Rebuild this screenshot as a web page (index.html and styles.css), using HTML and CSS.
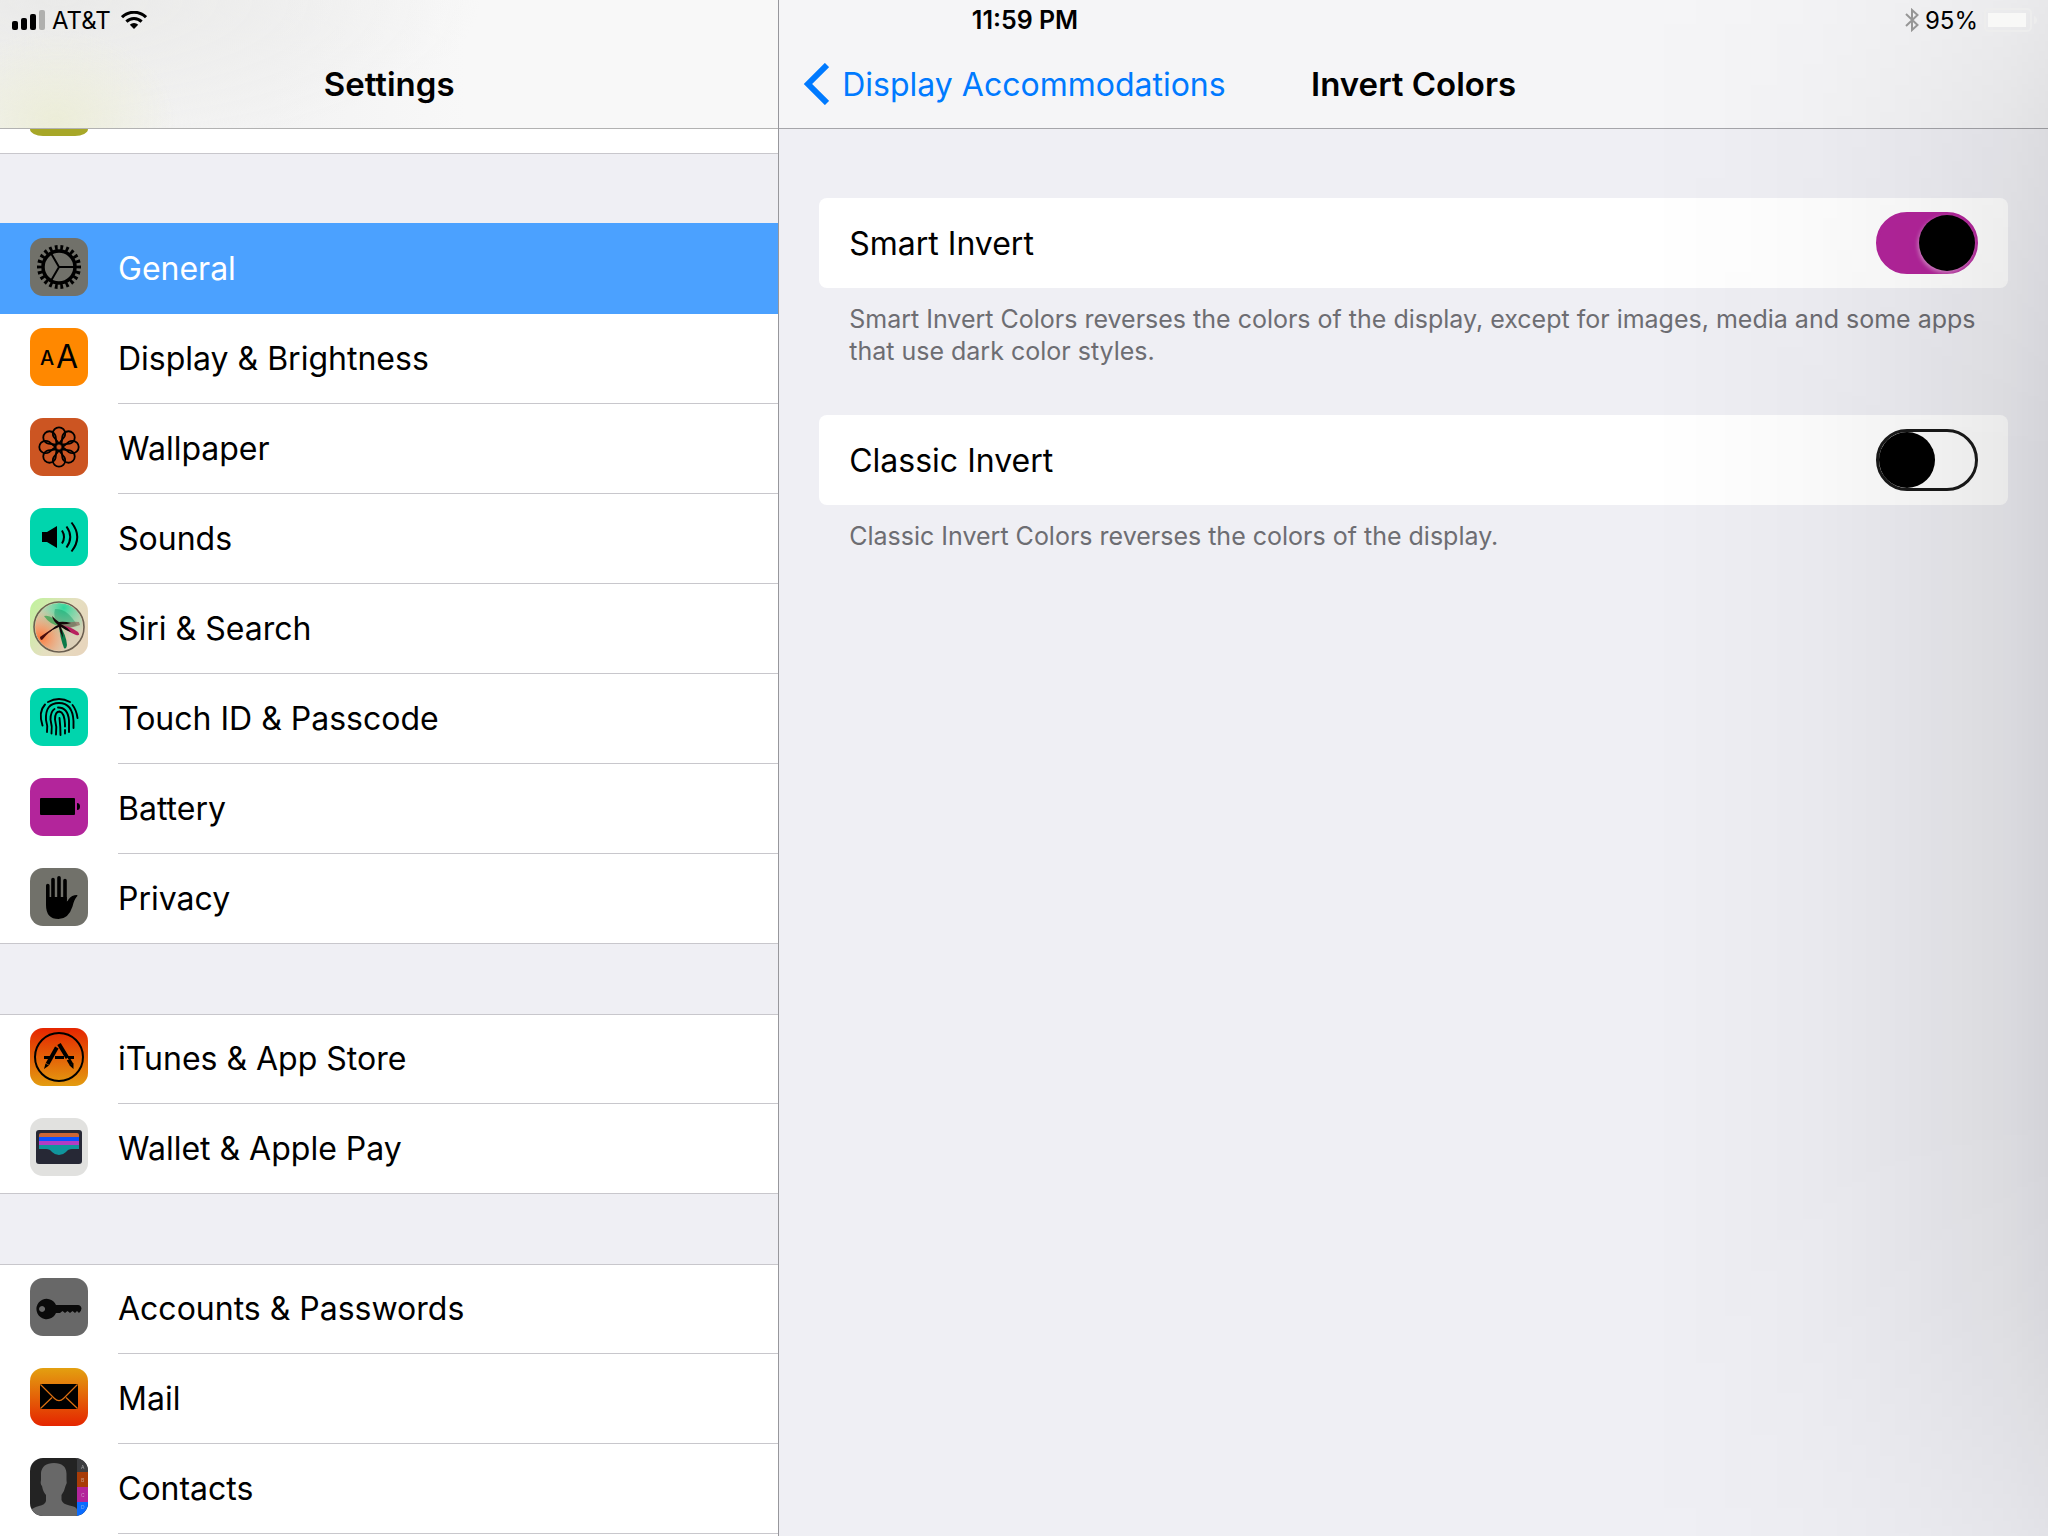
FILE: index.html
```html
<!DOCTYPE html>
<html lang="en">
<head>
  <meta charset="UTF-8" />
  <meta name="viewport" content="width=device-width, initial-scale=1.0"/>
  <title>Settings – Invert Colors</title>
  <link rel="stylesheet" href="styles.css">
</head>
<body>

  <div class="status-bar">
    <div class="status-left">
      <svg class="signal" width="34" height="20" viewBox="0 0 34 20">
        <rect x="0" y="11" width="6" height="9" rx="2"/>
        <rect x="9" y="8" width="6" height="12" rx="2"/>
        <rect x="18" y="4" width="6" height="16" rx="2"/>
        <rect x="27" y="0" width="6" height="20" rx="2" fill="#b0b0ae"/>
      </svg>
      <span class="carrier">AT&amp;T</span>
      <svg width="26" height="18" viewBox="0 0 26 18" fill="none" stroke="#000" stroke-width="3">
        <path d="M1 6.2a17 17 0 0 1 24 0"/>
        <path d="M5.4 10.6a10.8 10.8 0 0 1 15.2 0"/>
        <path d="M13 18l-4.2-4.2a6 6 0 0 1 8.4 0z" fill="#000" stroke="none"/>
      </svg>
    </div>
    <span class="clock">11:59 PM</span>
    <div class="status-right">
      <svg width="14" height="24" viewBox="0 0 14 24" fill="none" stroke="#969696" stroke-width="2">
        <path d="M1 6l11.500 11-5.500 5V2l5.500 5L1 18"/>
      </svg>
      <span>95%</span>
      <svg width="54" height="24" viewBox="0 0 54 24">
        <rect x="1" y="1" width="46" height="22" rx="4" fill="none" stroke="#ededed" stroke-width="2"/>
        <rect x="4" y="5" width="38" height="14" fill="#f8f8f7"/>
        <path d="M50 8q3 1 3 4t-3 4z" fill="#ededed"/>
      </svg>
    </div>
  </div>

  <div class="split">
    <nav class="sidebar">
      <header class="bar sidebar-bar">
        <h1>Settings</h1>
      </header>

      <div class="group group-scrolled">
        <span class="scrolled-icon"></span>
      </div>

      <div class="group">
        <a class="row selected" href="#general">
          <svg class="icon" viewBox="0 0 58 58">
            <rect width="58" height="58" rx="13" fill="#71716a"/>
            <g fill="none" stroke="#000">
              <circle cx="29" cy="29" r="16" stroke-width="3.500"/>
              <circle cx="29" cy="29" r="19.500" stroke-width="5" pathLength="44" stroke-dasharray="1 1" stroke-dashoffset=".5"/>
              <path d="M29 29h16M29 29l-8-13.800M29 29l-8 13.800" stroke-width="2"/>
            </g>
          </svg>
          <span>General</span>
        </a>
        <a class="row" href="#display">
          <svg class="icon" viewBox="0 0 58 58">
            <rect width="58" height="58" rx="13" fill="#ff8800"/>
            <text x="10" y="37" font-size="20" font-weight="500">A</text>
            <text x="26" y="40" font-size="32" font-weight="400">A</text>
          </svg>
          <span>Display &amp; Brightness</span>
        </a>
        <a class="row" href="#wallpaper">
          <svg class="icon" viewBox="0 0 58 58">
            <rect width="58" height="58" rx="13" fill="#cc5522"/>
            <defs>
              <path id="petal" d="M29 25.500l-5.200-6.500q-1-1.500-1-3.500a6.200 6.200 0 0 1 12.400 0q0 2-1 3.500z"/>
            </defs>
            <g fill="none" stroke="#000" stroke-width="1.800">
              <use href="#petal"/>
              <use href="#petal" transform="rotate(45 29 29)"/>
              <use href="#petal" transform="rotate(90 29 29)"/>
              <use href="#petal" transform="rotate(135 29 29)"/>
              <use href="#petal" transform="rotate(180 29 29)"/>
              <use href="#petal" transform="rotate(225 29 29)"/>
              <use href="#petal" transform="rotate(270 29 29)"/>
              <use href="#petal" transform="rotate(315 29 29)"/>
              <circle cx="29" cy="29" r="3.600"/>
            </g>
          </svg>
          <span>Wallpaper</span>
        </a>
        <a class="row" href="#sounds">
          <svg class="icon" viewBox="0 0 58 58">
            <rect width="58" height="58" rx="13" fill="#00d5ad"/>
            <path d="M12 24h5l10-6v22l-10-6h-5z"/>
            <g fill="none" stroke="#000" stroke-width="2">
              <path d="M32 22.500q4 6.500 0 13"/>
              <path d="M36.500 18.500q7.500 10.500 0 21"/>
              <path d="M41.500 14.500q11.500 14.500 0 29"/>
            </g>
          </svg>
          <span>Sounds</span>
        </a>
        <a class="row" href="#siri">
          <svg class="icon" viewBox="0 0 58 58">
            <defs>
              <linearGradient id="siri-bg" x1="0" y1="0" x2="1" y2=".6">
                <stop offset="0" stop-color="#bff39b"/>
                <stop offset=".6" stop-color="#e5dfc0"/>
                <stop offset="1" stop-color="#e7d6bd"/>
              </linearGradient>
              <radialGradient id="siri-green" cx=".6" cy=".1" r=".65">
                <stop offset="0" stop-color="#2cd79c"/>
                <stop offset="1" stop-color="#8fdca8" stop-opacity="0"/>
              </radialGradient>
              <radialGradient id="siri-orange" cx=".12" cy=".72" r=".6">
                <stop offset="0" stop-color="#ff7a3c"/>
                <stop offset="1" stop-color="#f0a070" stop-opacity="0"/>
              </radialGradient>
              <clipPath id="siri-clip"><circle cx="29" cy="29" r="24"/></clipPath>
            </defs>
            <rect width="58" height="58" rx="13" fill="url(#siri-bg)"/>
            <g clip-path="url(#siri-clip)">
              <circle cx="29" cy="29" r="24" fill="#dcd0b8"/>
              <circle cx="29" cy="29" r="24" fill="url(#siri-green)"/>
              <circle cx="29" cy="29" r="24" fill="url(#siri-orange)"/>
              <path d="M30 28Q20 27 14 18q8-2 16 10z" fill="#2f9e4a" opacity=".7"/>
              <path d="M30 28Q22 20 25 11q12-1 22 16-8 4-17 1z" fill="#0f9060" opacity=".4"/>
              <path d="M29 27q10-4 20-3l1 3q-9 4-21 2z" fill="#8a5a50" opacity=".6"/>
              <path d="M30 27q10 1 18 7 3 4-2 3-8-3-16-10z" fill="#b8205f"/>
              <path d="M29 27q7 9 8 20-1 5-3 3-4-10-5-23z" fill="#0c7a48"/>
              <path d="M31 26Q19 32 10 39q0 3 2 3 8-10 19-16z" fill="#4a0d0d"/>
              <path d="M31 26q6 3 10 8-6-2-10-5 2 6 2 11-3-6-4-11-6 2-10 6 4-6 9-8-5-4-6-9 4 4 7 6 5-1 12 1-6 2-10 1z" fill="#130609"/>
            </g>
            <circle cx="29" cy="29" r="25" fill="none" stroke="#6b5f50" stroke-width="1.600"/>
          </svg>
          <span>Siri &amp; Search</span>
        </a>
        <a class="row" href="#touchid">
          <svg class="icon" viewBox="0 0 58 58">
            <rect width="58" height="58" rx="13" fill="#00d5ad"/>
            <g fill="none" stroke="#000" stroke-width="1.900" stroke-linecap="round">
              <path d="M18 14q11-6 22 0"/>
              <path d="M12.500 37.500Q8 24 15 16.500"/>
              <path d="M42.500 17q4 5 5 13"/>
              <path d="M17 44q1-6-1-12-1-17 13-17 13.500 0 14.500 18v7"/>
              <path d="M21.500 45.500q1-7-1-14 0-8 4-10.500"/>
              <path d="M28 19.500q10 0 11 13v11.500"/>
              <path d="M26 46.500q1-8-1-15 0-8 4.500-8 5 1 5.500 13v2"/>
              <path d="M35 42v3.500"/>
              <path d="M30.500 47q0-8-1-17"/>
            </g>
          </svg>
          <span>Touch ID &amp; Passcode</span>
        </a>
        <a class="row" href="#battery">
          <svg class="icon" viewBox="0 0 58 58">
            <rect width="58" height="58" rx="13" fill="#b3259b"/>
            <rect x="10" y="20" width="35" height="17" rx="1"/>
            <path d="M47 25q3 0 3 3.500T47 32z"/>
          </svg>
          <span>Battery</span>
        </a>
        <a class="row row-last" href="#privacy">
          <svg class="icon" viewBox="0 0 58 58">
            <rect width="58" height="58" rx="13" fill="#71716a"/>
            <g stroke="#000" stroke-width="3.600" stroke-linecap="round">
              <path d="M17.800 17.500V34M23 11.500V32M29 9.800V32M35 12.500V32"/>
            </g>
            <path d="M16 29h20.800v4.500q1-.5 2-2.500 3-4 8-4 1.500.5-.3 2-2.500 3-4 9.500Q38.500 51 28.500 51 16 51 16 37z"/>
          </svg>
          <span>Privacy</span>
        </a>
      </div>

      <div class="group">
        <a class="row" href="#store">
          <svg class="icon" viewBox="0 0 58 58">
            <defs>
              <linearGradient id="store-bg" x1="0" y1="0" x2="0" y2="1">
                <stop offset="0" stop-color="#e52500"/>
                <stop offset="1" stop-color="#e39c10"/>
              </linearGradient>
            </defs>
            <rect width="58" height="58" rx="13" fill="url(#store-bg)"/>
            <circle cx="29" cy="29" r="24" fill="none" stroke="#000" stroke-width="2"/>
            <path d="M14 28h8v3h-8zM25 28h9v3h-9zM38 28h6v3h-6z"/>
            <g fill="none" stroke="#000" stroke-width="4">
              <path d="M26.800 19.500L17.500 36"/>
              <path d="M29 16l8.500 14M38.500 31.500l3 5"/>
            </g>
            <path d="M15.500 35.500l3.500 2-5 3.500zM39.500 37.500l4-2.500v6z"/>
          </svg>
          <span>iTunes &amp; App Store</span>
        </a>
        <a class="row row-last" href="#wallet">
          <svg class="icon" viewBox="0 0 58 58">
            <rect width="58" height="58" rx="13" fill="#e1e1df"/>
            <rect x="6" y="12" width="46" height="34" rx="3" fill="#262835"/>
            <path d="M9 19v-2q0-2 2-2h36q2 0 2 2v2z" fill="#cb6636"/>
            <rect x="9" y="19" width="40" height="4" fill="#0a50ff"/>
            <rect x="9" y="23" width="40" height="4" fill="#b23cc4"/>
            <path d="M9 27h40v4h-7q-4 0-6 3-3 3-7 3t-7-3q-2-3-6-3H9z" fill="#10959c"/>
          </svg>
          <span>Wallet &amp; Apple Pay</span>
        </a>
      </div>

      <div class="group group-fill">
        <a class="row" href="#accounts">
          <svg class="icon" viewBox="0 0 58 58">
            <rect width="58" height="58" rx="13" fill="#686868"/>
            <path fill-rule="evenodd" d="M26 27h22q3 0 3.500 3.500-.5 3.500-2.500 4.500l-2-2-2 2-2.500-2-2.500 2-2.500-2-2.500 2-2.500-2-2.500 2H26A10.200 10.200 0 1 1 26 27zM12 28a3 3 0 1 0 .1 0z" fill="#0a0a0a"/>
          </svg>
          <span>Accounts &amp; Passwords</span>
        </a>
        <a class="row" href="#mail">
          <svg class="icon" viewBox="0 0 58 58">
            <defs>
              <linearGradient id="mail-bg" x1="0" y1="0" x2="0" y2="1">
                <stop offset="0" stop-color="#e3a010"/>
                <stop offset="1" stop-color="#e52500"/>
              </linearGradient>
            </defs>
            <rect width="58" height="58" rx="13" fill="url(#mail-bg)"/>
            <rect x="10" y="16" width="38" height="25" rx="1"/>
            <path d="M10.500 16.500l14 14q4.500 4.500 9 0l14-14M10.500 40.500l11.500-11M47.500 40.500L36 29.500" fill="none" stroke="#dd6f10" stroke-width="1.200"/>
          </svg>
          <span>Mail</span>
        </a>
        <a class="row" href="#contacts">
          <svg class="icon" viewBox="0 0 58 58">
            <defs>
              <clipPath id="contacts-clip"><rect width="58" height="58" rx="13"/></clipPath>
            </defs>
            <g clip-path="url(#contacts-clip)">
              <rect width="58" height="58" fill="#232323"/>
              <path d="M24 5q12 0 12.500 10.500v6.500q1 3-1 6-1 5-4 9v5q1 4 8 5.500 7 1 7.500 4V58H0v-5q2-3 9-5 6-1 7-5v-6q-3-3-4-9-2-2-1-6v-7Q12 5 24 5z" fill="#686868"/>
              <rect x="47" y="0" width="11" height="14" fill="#3c3d40"/>
              <rect x="47" y="14" width="11" height="15" fill="#a83c08"/>
              <rect x="47" y="29" width="11" height="15" fill="#b3259b"/>
              <rect x="47" y="44" width="11" height="14" fill="#0a6cff"/>
              <g class="tab-letters" font-size="5">
                <text x="51" y="11">A</text>
                <text x="51" y="24">B</text>
                <text x="51" y="39">C</text>
                <text x="51" y="51">D</text>
              </g>
            </g>
          </svg>
          <span>Contacts</span>
        </a>
      </div>
    </nav>

    <main class="detail">
      <header class="bar detail-bar">
        <a class="back" href="#accommodations">
          <svg width="26" height="42" viewBox="0 0 26 42" fill="none" stroke="#007aff" stroke-width="6">
            <path d="M24 2L5 21l19 19"/>
          </svg>
          <span>Display Accommodations</span>
        </a>
        <h2>Invert Colors</h2>
      </header>

      <section class="options">
        <div class="option">
          <div class="card">
            <label for="smart-invert">Smart Invert</label>
            <input class="switch" type="checkbox" role="switch" id="smart-invert" checked />
          </div>
          <p>Smart Invert Colors reverses the colors of the display, except for images, media and some apps that use dark color styles.</p>
        </div>
        <div class="option">
          <div class="card">
            <label for="classic-invert">Classic Invert</label>
            <input class="switch" type="checkbox" role="switch" id="classic-invert" />
          </div>
          <p>Classic Invert Colors reverses the colors of the display.</p>
        </div>
      </section>
    </main>
  </div>

</body>
</html>
```
FILE: styles.css
```css
* {
  box-sizing: border-box;
}
body {
  font-family: Inter, 'Liberation Sans', sans-serif;
  font-size: 32px;
  color: #000;
  background-color: #efeff4;
  margin: 0;
}
a {
  color: inherit;
  text-decoration: none;
}
h1, h2 {
  margin: 0;
  font-size: 33px;
  font-weight: 600;
}

/* status bar, lies over both panes */
.status-bar {
  position: absolute;
  top: 0;
  left: 0;
  right: 0;
  z-index: 2;
  height: 40px;
  padding: 0 10px 0 12px;
  display: grid;
  grid-template-columns: 1fr auto 1fr;
  align-items: center;
  font-size: 24px;
}
.status-left, .status-right {
  display: flex;
  align-items: center;
}
.status-left {
  gap: 10px;
}
.signal {
  margin-right: -4px;
}
.status-right {
  gap: 6px;
  justify-content: flex-end;
}
.clock {
  font-size: 25px;
  font-weight: 600;
}

.split {
  display: flex;
  height: 100vh;
  overflow: hidden;
}
.bar {
  flex: none;
  height: 129px;
  padding-top: 40px;
  border-bottom: 1px solid #a5a5aa;
}

/* sidebar */
.sidebar {
  flex: 0 0 calc(38% + 1px);
  display: flex;
  flex-direction: column;
  gap: 70px;
  border-right: 1px solid #97979c;
}
.sidebar-bar {
  display: flex;
  align-items: center;
  justify-content: center;
  margin-bottom: -70px;
  border-bottom-color: #b2b2b2;
  background:
    radial-gradient(ellipse 120px 90px at 56px 120px, #ecedd8, transparent),
    radial-gradient(ellipse 420px 150px at 60px 0, #eaeae9, transparent),
    linear-gradient(90deg, #f3f3f1, #f3f3f3 35%, #f8f8f8 60%);
}
.group {
  flex: none;
  background-color: #fff;
  box-shadow: inset 0 1px #c8c7cc;
}
.group-scrolled {
  height: 25px;
  padding: 0 30px;
  overflow: hidden;
  box-shadow: none;
  border-bottom: 1px solid #c8c7cc;
}
.scrolled-icon {
  display: block;
  width: 58px;
  height: 7px;
  border-radius: 0 0 13px 13px / 0 0 7px 7px;
  background-color: #a7a728;
}
.group-fill {
  flex: 1 0 auto;
}
.row {
  display: flex;
  align-items: center;
  height: 90px;
  padding-left: 30px;
}
.row span {
  flex: 1;
  display: flex;
  align-items: center;
  height: 90px;
  margin-left: 30px;
  border-bottom: 1px solid #c8c7cc;
}
.row-last {
  border-bottom: 1px solid #c8c7cc;
}
.row-last span {
  border-bottom: none;
}
.selected {
  background-color: #4ba1ff;
  box-shadow: 0 -1px #4ba1ff;
  color: #fff;
}
.selected span {
  border-bottom-color: #4ba1ff;
}
.icon {
  flex: none;
  width: 58px;
  height: 58px;
  margin-bottom: 4px;
}
.tab-letters {
  fill: #ddd;
  opacity: .6;
}

/* detail pane */
.detail {
  flex: 1;
  position: relative;
}
/* shade along the right edge */
.detail::after {
  content: "";
  position: absolute;
  top: 0;
  right: 0;
  bottom: 0;
  width: 400px;
  pointer-events: none;
  background: linear-gradient(270deg, rgba(0,0,0,.115), rgba(0,0,0,.085) 10%, rgba(0,0,0,.05) 33%, rgba(0,0,0,.022) 58%, rgba(0,0,0,.006) 84%, transparent);
  -webkit-mask-image: linear-gradient(rgba(0,0,0,.45), rgba(0,0,0,.7) 8%, #000 30%, #000 72%, rgba(0,0,0,.85) 85%, rgba(0,0,0,.45));
  mask-image: linear-gradient(rgba(0,0,0,.45), rgba(0,0,0,.7) 8%, #000 30%, #000 72%, rgba(0,0,0,.85) 85%, rgba(0,0,0,.45));
}
.detail-bar {
  display: grid;
  grid-template-columns: 1fr auto 1fr;
  align-items: center;
  padding-left: 24px;
  padding-right: 24px;
  background-color: #f5f5f7;
}
.back {
  display: flex;
  align-items: center;
  gap: 13px;
  color: #007aff;
}
.options {
  display: flex;
  flex-direction: column;
  gap: 48px;
  padding: 69px 40px;
}
.card {
  display: flex;
  align-items: center;
  justify-content: space-between;
  height: 90px;
  padding: 0 30px;
  border-radius: 8px;
  background-color: #fff;
}
.option p {
  margin: 15px 0 0;
  padding-left: 30px;
  font-size: 25px;
  line-height: 32px;
  color: #6d6d72;
}
.switch {
  appearance: none;
  -webkit-appearance: none;
  display: flex;
  width: 102px;
  height: 62px;
  margin: 0;
  border: 3px solid #1a1a1a;
  border-radius: 31px;
}
.switch::before {
  content: "";
  width: 56px;
  height: 56px;
  border-radius: 50%;
  background-color: #000;
}
.switch:checked {
  justify-content: flex-end;
  border-color: #b3259b;
  background-color: #b3259b;
}
.switch:checked::before {
  box-shadow: -1px 2px 4px rgba(255,255,255,.45);
}
```
